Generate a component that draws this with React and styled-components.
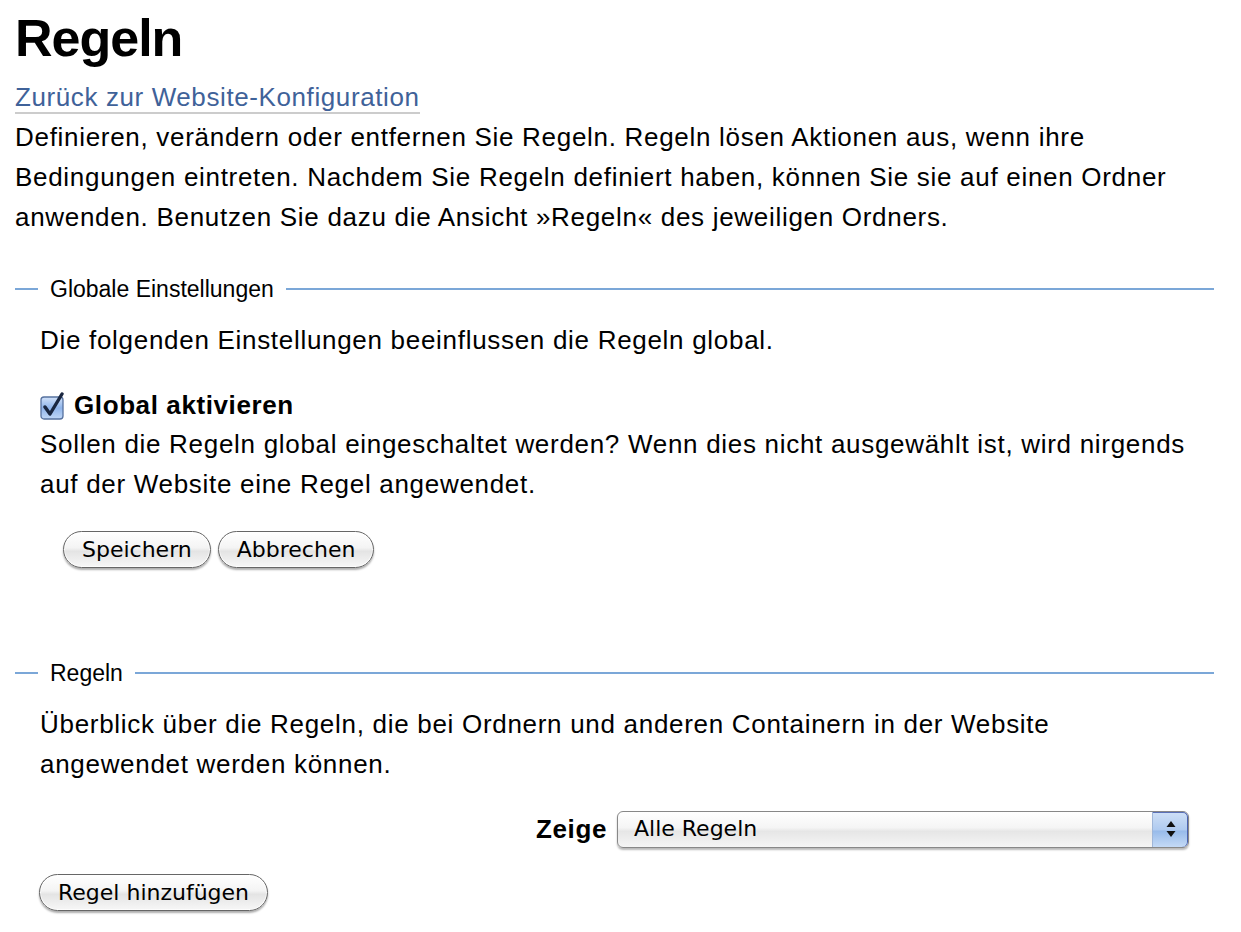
import React from "react";
import styled, { createGlobalStyle } from "styled-components";

const Global = createGlobalStyle`
  html, body { margin: 0; padding: 0; background: #fff; }
  body { font-family: "Liberation Sans", Arial, sans-serif; color: #000; }
`;

const Page = styled.div`
  width: 1199px;
  padding: 0 0 20px 15px;
  font-size: 26px;
  line-height: 40px;
`;

const Title = styled.h1`
  margin: 0;
  padding-top: 10px;
  font-size: 52px;
  line-height: 56px;
  font-weight: bold;
  letter-spacing: -1px;
`;

const BackLink = styled.a`
  display: inline-block;
  margin-top: 16px;
  color: #3f6299;
  text-decoration: none;
  font-size: 26px;
  letter-spacing: 0.6px;
  line-height: 30px;
  border-bottom: 2px solid #cccccc;
`;

const Text = styled.p`
  margin: ${(p) => p.$m || "0"};
  font-size: 26px;
  letter-spacing: 0.7px;
  line-height: 40px;
`;

const Fieldset = styled.fieldset`
  margin: ${(p) => p.$top || "0"} 0 0 0;
  padding: 0 25px 0 25px;
  border: none;
  border-top: 2px solid #7ba7d8;
  min-width: 0;
`;

const Legend = styled.legend`
  margin-left: -2px;
  padding: 0 12px;
  font-size: 23px;
  line-height: 26px;
`;

const CheckRow = styled.label`
  display: flex;
  align-items: center;
  gap: 8px;
  margin-top: 27px;
  font-weight: bold;
  font-size: 26px;
  letter-spacing: 0.6px;
  line-height: 37px;
`;

const ButtonRow = styled.div`
  display: flex;
  gap: 7px;
  margin: ${(p) => p.$m || "0"};
`;

const AquaButton = styled.button`
  height: 37px;
  padding: 0 18px;
  border-radius: 19px;
  border: 1px solid #666;
  background: linear-gradient(#ffffff 0%, #f4f4f4 45%, #e4e4e4 55%, #f7f7f7 100%);
  box-shadow: 0 2px 2px rgba(0, 0, 0, 0.32), inset 0 0 0 1px rgba(255,255,255,0.7);
  font-family: "DejaVu Sans", "Lucida Grande", sans-serif;
  font-size: 22px;
  color: #000;
  line-height: 35px;
  cursor: pointer;
`;

const SelectRow = styled.div`
  display: flex;
  justify-content: flex-end;
  align-items: center;
  gap: 10px;
  margin-top: 25px;
`;

const SelectLabel = styled.span`
  font-weight: bold;
  font-size: 26px;
  letter-spacing: 0.6px;
`;

const SelectBox = styled.div`
  width: 570px;
  height: 35px;
  border: 1px solid #888;
  border-radius: 6px;
  background: linear-gradient(#ffffff 0%, #f5f5f5 45%, #e6e6e6 55%, #f5f5f5 100%);
  box-shadow: 0 2px 2px rgba(0, 0, 0, 0.28);
  display: flex;
  align-items: center;
  overflow: hidden;
`;

const SelectValue = styled.span`
  flex: 1;
  padding-left: 16px;
  font-family: "DejaVu Sans", "Lucida Grande", sans-serif;
  font-size: 22px;
`;

const Stepper = styled.div`
  width: 35px;
  height: 100%;
  border-left: 1px solid #9fb6d8;
  background: linear-gradient(#cfe0f6 0%, #b0cbf0 50%, #98bbea 55%, #c4daf6 100%);
  display: flex;
  align-items: center;
  justify-content: center;
  border-radius: 0 5px 5px 0;
  box-shadow: inset -1px 0 0 #4a62b0, inset 0 1px 0 #5a70b8;
`;

const AddRow = styled.div`
  margin-top: 22px;
  margin-left: 24px;
`;

function Checkbox() {
  return (
    <svg width="26" height="28" viewBox="0 0 26 28">
      <defs>
        <linearGradient id="cbg" x1="0" y1="0" x2="0" y2="1">
          <stop offset="0" stopColor="#d2e2f9" />
          <stop offset="0.5" stopColor="#8fb4ea" />
          <stop offset="1" stopColor="#c0d7f6" />
        </linearGradient>
      </defs>
      <rect x="1" y="5" width="22" height="22" rx="3" fill="url(#cbg)" stroke="#56719f" strokeWidth="1.3" />
      <path d="M5 15 L10 22 L22 2" fill="none" stroke="#1a2740" strokeWidth="3.4" strokeLinejoin="round" strokeLinecap="round" />
    </svg>
  );
}

function Arrows() {
  return (
    <svg width="12" height="20" viewBox="0 0 12 20">
      <path d="M6 2 L10.5 8 L1.5 8 Z" fill="#111" />
      <path d="M6 18 L10.5 12 L1.5 12 Z" fill="#111" />
    </svg>
  );
}

export default function App() {
  return (
    <>
      <Global />
      <Page>
        <Title>Regeln</Title>
        <BackLink href="#">Zurück zur Website-Konfiguration</BackLink>
        <Text>
          Definieren, verändern oder entfernen Sie Regeln. Regeln lösen Aktionen aus, wenn ihre
          Bedingungen eintreten. Nachdem Sie Regeln definiert haben, können Sie sie auf einen Ordner
          anwenden. Benutzen Sie dazu die Ansicht »Regeln« des jeweiligen Ordners.
        </Text>

        <Fieldset $top="39px">
          <Legend>Globale Einstellungen</Legend>
          <Text $m="18px 0 0 0">Die folgenden Einstellungen beeinflussen die Regeln global.</Text>
          <CheckRow>
            <Checkbox />
            Global aktivieren
          </CheckRow>
          <Text>
            Sollen die Regeln global eingeschaltet werden? Wenn dies nicht ausgewählt ist, wird nirgends
            auf der Website eine Regel angewendet.
          </Text>
          <ButtonRow $m="27px 0 0 23px">
            <AquaButton>Speichern</AquaButton>
            <AquaButton>Abbrechen</AquaButton>
          </ButtonRow>
        </Fieldset>

        <Fieldset $top="92px">
          <Legend>Regeln</Legend>
          <Text $m="18px 0 0 0">
            Überblick über die Regeln, die bei Ordnern und anderen Containern in der Website
            angewendet werden können.
          </Text>
          <SelectRow>
            <SelectLabel>Zeige</SelectLabel>
            <SelectBox>
              <SelectValue>Alle Regeln</SelectValue>
              <Stepper>
                <Arrows />
              </Stepper>
            </SelectBox>
          </SelectRow>
        </Fieldset>
        <AddRow>
          <AquaButton>Regel hinzufügen</AquaButton>
        </AddRow>
      </Page>
    </>
  );
}
